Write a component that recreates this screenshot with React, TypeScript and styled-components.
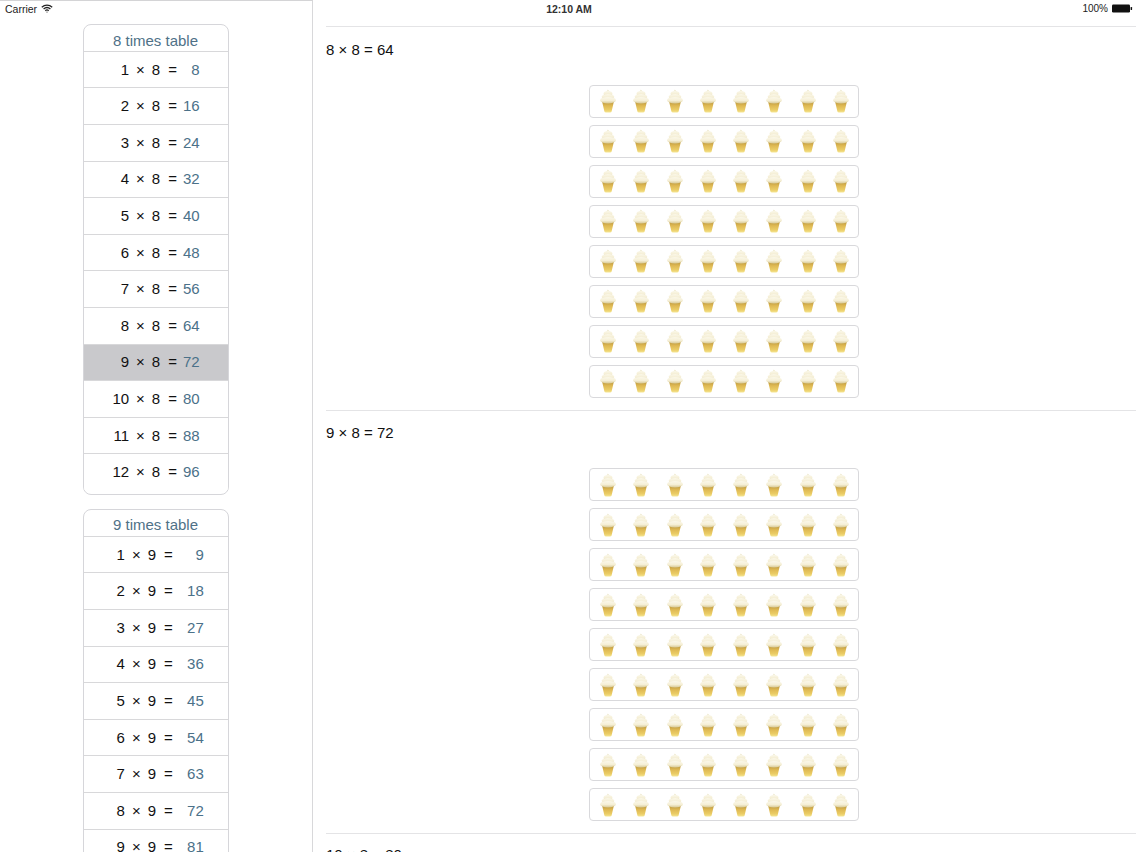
import React from "react";
import styled, { createGlobalStyle } from "styled-components";

const Global = createGlobalStyle`
  html, body { margin: 0; padding: 0; height: 852px; overflow: hidden; background: #fff; }
  body { font-family: "Liberation Sans", Arial, sans-serif; }
  #root { height: 852px; }
`;

const Page = styled.div`
  position: relative;
  width: 1136px;
  height: 852px;
  display: flex;
  overflow: hidden;
  background: #fff;
`;

const StatusBar = styled.div`
  position: absolute;
  inset: 0 0 auto 0;
  height: 17px;
  padding: 0 3px 0 5px;
  display: grid;
  grid-template-columns: 1fr auto 1fr;
  align-items: center;
  font-size: 10.5px;
  color: #222;
`;

const StatusLeft = styled.div`
  display: flex;
  align-items: center;
  gap: 4px;
`;

const StatusTime = styled.div`
  font-weight: 700;
  color: #333;
`;

const StatusRight = styled.div`
  display: flex;
  align-items: center;
  justify-content: flex-end;
  gap: 4px;
  font-size: 10px;
`;

const Sidebar = styled.aside`
  flex: 0 0 313px;
  box-sizing: border-box;
  height: 852px;
  border-top: 1px solid #d4d4d6;
  border-right: 1px solid #d8d8da;
  padding-top: 23px;
  display: flex;
  flex-direction: column;
  align-items: center;
  gap: 14.05px;
  overflow: hidden;
`;

const Card = styled.section`
  flex: none;
  box-sizing: border-box;
  width: 146px;
  margin-right: 1px;
  border: 1px solid #d6d6da;
  border-radius: 8px;
  padding-bottom: 4px;
  overflow: hidden;
`;

const CardTitle = styled.h2`
  margin: 0;
  height: 25.8px;
  box-sizing: border-box;
  padding-top: 6.5px;
  font-size: 15px;
  line-height: 18px;
  font-weight: 400;
  text-align: center;
  color: #4f7187;
`;

const Row = styled.div<{ $selected?: boolean }>`
  box-sizing: border-box;
  height: 36.6px;
  padding: 0 0 1px 1px;
  border-top: 1px solid #d8d8da;
  background: ${(p) => (p.$selected ? "#c9c9cc" : "#fff")};
  display: flex;
  align-items: center;
  justify-content: center;
  gap: 7px;
  font-size: 15px;
  color: #111;
`;

const Num = styled.span`
  width: 16.7px;
  text-align: right;
`;

const Equals = styled.span`
  margin: 0 -1px 0 1px;
`;

const Answer = styled.span<{ $wide: boolean }>`
  width: ${(p) => (p.$wide ? "25px" : "16.7px")};
  text-align: right;
  color: #4b7189;
`;

const Main = styled.main`
  flex: 1;
  min-width: 0;
  padding: 26px 0 0 13px;
  overflow: hidden;
`;

const Section = styled.section`
  border-top: 1px solid #e4e4e6;
  padding-bottom: 12px;
  display: flex;
  flex-direction: column;
`;

const SectionTitle = styled.h3<{ $top: number }>`
  margin: 0;
  height: 57.6px;
  box-sizing: border-box;
  padding-top: ${(p) => p.$top}px;
  font-size: 15px;
  line-height: 18px;
  font-weight: 400;
  color: #111;
`;

const Grid = styled.div`
  width: 270px;
  margin-left: 263px;
  display: flex;
  flex-direction: column;
  gap: 7px;
`;

const ConeRow = styled.div`
  box-sizing: border-box;
  height: 33px;
  padding-left: 1px;
  border: 1px solid #d9d9dc;
  border-radius: 4px;
  display: flex;
  align-items: center;
  justify-content: center;
`;

const ConeCell = styled.div`
  flex: 0 0 33.3px;
  display: flex;
  justify-content: center;
`;

const Wifi = () => (
  <svg width="12" height="9" viewBox="0 0 12 9" fill="none" stroke="#222" strokeWidth="1.3">
    <path d="M0.8 3.2C3.8 0.4 8.2 0.4 11.2 3.2" />
    <path d="M2.6 5C4.6 3.2 7.4 3.2 9.4 5" />
    <path d="M4.3 6.7C5.3 5.8 6.7 5.8 7.7 6.7" />
    <circle cx="6" cy="8" r="0.6" fill="#222" stroke="none" />
  </svg>
);

const Battery = () => (
  <svg width="21" height="9" viewBox="0 0 21 9">
    <rect x="0" y="0.5" width="18" height="8" rx="1.2" fill="#111" />
    <rect x="18.6" y="3" width="1.5" height="3" rx="0.6" fill="#111" />
  </svg>
);

const IceCream = ({ id }: { id: string }) => (
  <svg width="18" height="24" viewBox="0 0 18 24">
    <defs>
      <linearGradient id={`cone-${id}`} x1="0" y1="0" x2="0" y2="1">
        <stop offset="0" stopColor="#bd9a3e" />
        <stop offset="0.35" stopColor="#deb853" />
        <stop offset="0.75" stopColor="#ebcd66" />
        <stop offset="1" stopColor="#f5e592" />
      </linearGradient>
      <linearGradient id={`cream-${id}`} x1="0" y1="0" x2="0" y2="1">
        <stop offset="0" stopColor="#fbf8ea" />
        <stop offset="0.55" stopColor="#f5efd6" />
        <stop offset="1" stopColor="#d8c994" />
      </linearGradient>
    </defs>
    <path d="M3.2 13H14.8L12.6 22.4Q12.4 23.4 11 23.5H7Q5.6 23.4 5.4 22.4Z" fill={`url(#cone-${id})`} />
    <path d="M8.8 0.4C9.4 1.6 10.8 2.2 11.4 3.4L6.4 3.6C7.4 2.8 8.4 1.8 8.8 0.4Z" fill="#ece5c6" />
    <ellipse cx="9" cy="4.6" rx="4.4" ry="2.6" fill={`url(#cream-${id})`} />
    <ellipse cx="9" cy="7.8" rx="6.3" ry="2.9" fill={`url(#cream-${id})`} />
    <ellipse cx="9" cy="11.2" rx="7.9" ry="3.3" fill={`url(#cream-${id})`} />
  </svg>
);

const multipliers = [1, 2, 3, 4, 5, 6, 7, 8, 9, 10, 11, 12];

const TimesCard = ({ table, selected }: { table: number; selected?: number }) => (
  <Card>
    <CardTitle>{table} times table</CardTitle>
    {multipliers.map((m) => (
      <Row key={m} $selected={m === selected}>
        <Num>{m}</Num>
        <span>×</span>
        <span>{table}</span>
        <Equals>=</Equals>
        <Answer $wide={table > 8}>{m * table}</Answer>
      </Row>
    ))}
  </Card>
);

const Sum = ({ m, titleTop }: { m: number; titleTop: number }) => (
  <Section>
    <SectionTitle $top={titleTop}>
      {m} × 8 = {m * 8}
    </SectionTitle>
    <Grid>
      {Array.from({ length: m }, (_, r) => (
        <ConeRow key={r}>
          {Array.from({ length: 8 }, (_, c) => (
            <ConeCell key={c}>
              <IceCream id={`${m}-${r}-${c}`} />
            </ConeCell>
          ))}
        </ConeRow>
      ))}
    </Grid>
  </Section>
);

export default function App() {
  return (
    <Page>
      <Global />
      <Sidebar>
        <TimesCard table={8} selected={9} />
        <TimesCard table={9} />
      </Sidebar>
      <Main>
        <Sum m={8} titleTop={14} />
        <Sum m={9} titleTop={13} />
        <Sum m={10} titleTop={12} />
      </Main>
      <StatusBar>
        <StatusLeft>
          <span>Carrier</span>
          <Wifi />
        </StatusLeft>
        <StatusTime>12:10 AM</StatusTime>
        <StatusRight>
          <span>100%</span>
          <Battery />
        </StatusRight>
      </StatusBar>
    </Page>
  );
}
